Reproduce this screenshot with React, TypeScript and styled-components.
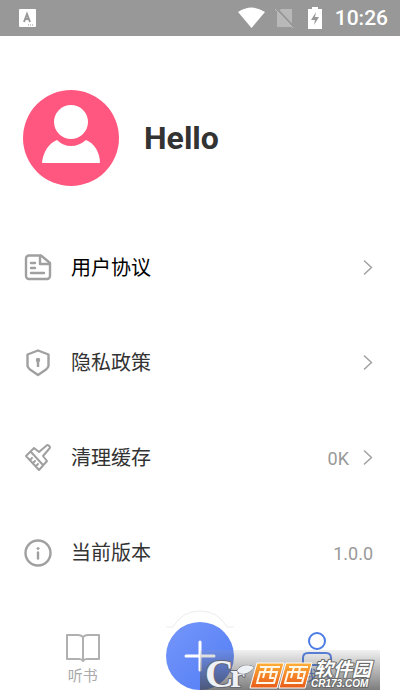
import React from "react";
import styled, { createGlobalStyle } from "styled-components";

const GlobalStyle = createGlobalStyle`
  * { box-sizing: border-box; }
  body {
    margin: 0;
    background: #fff;
    font-family: Roboto, "Noto Sans CJK SC", sans-serif;
  }
`;

const Screen = styled.div`
  min-height: 100vh;
  display: flex;
  flex-direction: column;
  background: #fff;
`;

const StatusBar = styled.header`
  height: 36px;
  flex: none;
  padding: 0 12px 0 19px;
  display: flex;
  align-items: center;
  justify-content: space-between;
  background: #989898;
  color: #fff;
  font-size: 21px;
  font-weight: 500;
`;

const StatusIcons = styled.div`
  display: flex;
  align-items: center;
  gap: 10px;
`;

const Clock = styled.time`
  line-height: 36px;
`;

const Profile = styled.section`
  padding: 54px 23px 34px;
  display: flex;
  align-items: center;
  gap: 25px;
`;

const UserName = styled.h1`
  margin: 0;
  font-size: 32px;
  line-height: 40px;
  font-weight: 700;
  color: #333;
`;

const Menu = styled.main`
  display: flex;
  flex-direction: column;
`;

const MenuRow = styled.button<{ $strong?: boolean }>`
  width: 100%;
  height: 95px;
  padding: 0 27px 0 24px;
  border: 0;
  background: none;
  display: flex;
  align-items: center;
  text-align: left;
  font: inherit;
  font-size: 20px;
  color: ${(p) => (p.$strong ? "#000" : "#333")};
  cursor: pointer;
`;

const RowLabel = styled.span`
  flex: 1;
  margin-left: 19px;
  line-height: 30px;
`;

const RowValue = styled.span`
  font-size: 18px;
  line-height: 24px;
  padding-top: 2px;
  color: #999;
`;

const Chevron = styled.svg`
  margin-left: 14px;
`;

const TabBar = styled.nav`
  position: relative;
  margin-top: auto;
  padding: 0 24px 10px;
  display: grid;
  grid-template-columns: repeat(3, 1fr);
  justify-items: center;
  align-items: end;
`;

const Tab = styled.button<{ $active?: boolean }>`
  width: 100%;
  height: 60px;
  padding: 0;
  border: 0;
  background: none;
  display: flex;
  flex-direction: column;
  align-items: center;
  font: inherit;
  font-size: 15px;
  line-height: 20px;
  color: ${(p) => (p.$active ? "#4b7be5" : "#aaa")};
  cursor: pointer;
`;

const AddArea = styled.div`
  display: flex;
  flex-direction: column;
  align-items: center;
`;

const Bulge = styled.svg`
  display: block;
  margin-bottom: -6px;
`;

const AddButton = styled.button`
  width: 68px;
  height: 68px;
  padding: 0;
  border: 0;
  border-radius: 50%;
  display: grid;
  place-items: center;
  background: linear-gradient(135deg, #7596fa, #527df5);
  cursor: pointer;
`;

const Watermark = styled.div`
  position: absolute;
  right: 20px;
  bottom: 10px;
  width: 180px;
  height: 40px;
  background: linear-gradient(rgba(160, 160, 160, 0.15), rgba(70, 70, 70, 0.7));
  pointer-events: none;
`;

const line = {
  fill: "none",
  stroke: "#a0a0a0",
  strokeWidth: 2.4,
  strokeLinecap: "round" as const,
  strokeLinejoin: "round" as const,
};

const DocumentIcon = () => (
  <svg width="28" height="28" viewBox="0 1 28 28" {...line}>
    <path d="M5 2.500H17L26 10V23a3 3 0 0 1-3 3H5a3 3 0 0 1-3-3V5.500a3 3 0 0 1 3-3Z" />
    <path d="M16 3v8h9M7 10h4M7 15h4M7 20h13" />
  </svg>
);

const ShieldIcon = () => (
  <svg width="28" height="28" viewBox="0 1 28 28" {...line}>
    <path d="M14 2.500L3.500 6.500V18Q4 20 6 21.500L14 27L22 21.500Q24 20 24.500 18V6.500Z" />
    <circle cx="14" cy="12" r="1.5" fill="#a0a0a0" strokeWidth="1.5" />
    <path d="M14 12v7" strokeWidth="2.5" strokeLinecap="butt" />
  </svg>
);

const BrushIcon = () => (
  <svg width="28" height="28" viewBox="0 0 28 28" {...line} strokeWidth="2">
    <path d="M10 4L15 8L22 2Q24 0 25 2Q27 3 25 5L19 12L23 17L15 26L2 12Z" />
    <path d="M7 8L19 21M6 16L8 14M9 19L11 17M12 22L14 20" />
  </svg>
);

const InfoIcon = () => (
  <svg width="28" height="28" viewBox="0 1 28 28" {...line}>
    <circle cx="14" cy="15" r="12.5" />
    <circle cx="14" cy="10.500" r="1" fill="#a0a0a0" strokeWidth="1" />
    <path d="M14 14.500v6" />
  </svg>
);

const ChevronIcon = () => (
  <Chevron width="10" height="16" viewBox="0 0 10 16" {...line} strokeWidth="1.5">
    <path d="M1.500 1L8.500 7.500L1.500 14" />
  </Chevron>
);

const Avatar = () => (
  <svg width="96" height="96" viewBox="0 0 96 96" role="img" aria-label="Avatar">
    <circle cx="48" cy="48" r="48" fill="#ff577f" />
    <circle cx="48" cy="32" r="17" fill="#fff" />
    <path d="M19 73C20 62 26 53 34 50Q40 56 48 56T63 50C71 53 77 62 77 73Z" fill="#fff" />
  </svg>
);

const WatermarkLogo = () => (
  <svg width="180" height="40" viewBox="0 0 180 40" role="img" aria-label="CR173.COM">
    <defs>
      <linearGradient id="tile" x2="0" y2="1">
        <stop offset="0" stopColor="#ffb038" />
        <stop offset="1" stopColor="#e85a18" />
      </linearGradient>
    </defs>
    <g
      fill="#eef1f6"
      stroke="#666872"
      strokeWidth="2"
      strokeLinejoin="round"
      paintOrder="stroke"
      fontFamily="Liberation Serif, serif"
      fontWeight="700"
    >
      <text x="5" y="37" fontSize="40">C</text>
      <text x="30" y="37" fontSize="34">r</text>
      <path d="M37 21C40 15 47 14 54 17C50 23 43 26 38 22Z" strokeWidth="1" />
    </g>
    <g fill="url(#tile)" stroke="#fff" strokeWidth="1">
      <path d="M57 13H84L77 38H50Z" />
      <path d="M86 13H112L105 38H79Z" />
    </g>
    <g fill="none" stroke="#fff8e8" strokeWidth="2">
      <path d="M60 17H80M60 22H77L74 33H57ZM66 17L63 28M72 17L70 28H74" />
      <path d="M89 17H108M88 22H105L102 33H85ZM94 17L91 28M100 17L98 28H102" />
    </g>
    <g
      fill="#fff"
      stroke="#6a6a6a"
      strokeWidth="2"
      paintOrder="stroke"
      strokeLinejoin="round"
      fontStyle="italic"
    >
      <text x="114" y="26" fontSize="19" fontWeight="700" fontFamily="Noto Sans CJK SC, sans-serif">软件园</text>
      <text x="111" y="37" fontSize="10" fontWeight="700" fontFamily="Liberation Sans, sans-serif">CR173.COM</text>
    </g>
  </svg>
);

const rows = [
  { label: "用户协议", Icon: DocumentIcon, link: true, strong: true },
  { label: "隐私政策", Icon: ShieldIcon, link: true },
  { label: "清理缓存", Icon: BrushIcon, link: true, value: "0K" },
  { label: "当前版本", Icon: InfoIcon, value: "1.0.0" },
];

export default function App() {
  return (
    <Screen>
      <GlobalStyle />
      <StatusBar>
        <svg width="17" height="18" viewBox="0 0 17 18">
          <rect width="17" height="18" rx="1" fill="#fff" />
          <path d="M5 13L8 5L11 13M6 10H10" fill="none" stroke="#999" strokeWidth="2" />
          <path d="M9 16h6" stroke="#999" strokeDasharray="1 1" />
        </svg>
        <StatusIcons>
          <svg width="27" height="22" viewBox="0 0 27 22">
            <path d="M0 5Q13.500-4 27 5L13.500 21Z" fill="#fff" />
          </svg>
          <svg width="20" height="22" viewBox="0 0 20 22">
            <path d="M6 2H17V20H2V6Z" fill="#b8b8b8" />
            <path d="M1 1L19 20" stroke="#989898" strokeWidth="2" />
            <path d="M0 2L18 21" stroke="#c0c0c0" />
          </svg>
          <svg width="20" height="22" viewBox="0 0 20 22">
            <path d="M7 0h6v2h4v20H3V2h4Z" fill="#fff" />
            <path d="M11 5L6 13H10L9 18L14 10H10Z" fill="#989898" />
          </svg>
          <Clock>10:26</Clock>
        </StatusIcons>
      </StatusBar>

      <Profile>
        <Avatar />
        <UserName>Hello</UserName>
      </Profile>

      <Menu>
        {rows.map(({ label, Icon, link, strong, value }) => (
          <MenuRow key={label} type="button" $strong={strong}>
            <Icon />
            <RowLabel>{label}</RowLabel>
            {value && <RowValue>{value}</RowValue>}
            {link && <ChevronIcon />}
          </MenuRow>
        ))}
      </Menu>

      <TabBar>
        <Tab type="button">
          <svg width="34" height="36" viewBox="0 0 34 36" fill="none" stroke="#b0b0b0" strokeWidth="2" strokeLinejoin="round">
            <path d="M17 7Q15 5 12 5H1V29H13Q16 29 17 31Q18 29 21 29H33V5H22Q19 5 17 7ZM17 7V31" />
          </svg>
          听书
        </Tab>
        <AddArea>
          <Bulge width="68" height="18" viewBox="0 0 68 18" fill="none" stroke="#ececec">
            <path d="M0 17H7Q16 1 34 1T61 17H68" />
          </Bulge>
          <AddButton type="button" aria-label="Add">
            <svg width="32" height="32" viewBox="0 0 32 32" stroke="#fff" strokeWidth="3" strokeLinecap="round">
              <path d="M16 2V30M2 16H30" />
            </svg>
          </AddButton>
        </AddArea>
        <Tab type="button" $active>
          <svg width="34" height="36" viewBox="0 0 34 36" fill="none" stroke="#4b7be5" strokeWidth="2">
            <circle cx="17" cy="11" r="8" />
            <path d="M3 35V28Q3 23 8 23H26Q31 23 31 28V35Z" />
          </svg>
          我的
        </Tab>
        <Watermark>
          <WatermarkLogo />
        </Watermark>
      </TabBar>
    </Screen>
  );
}
